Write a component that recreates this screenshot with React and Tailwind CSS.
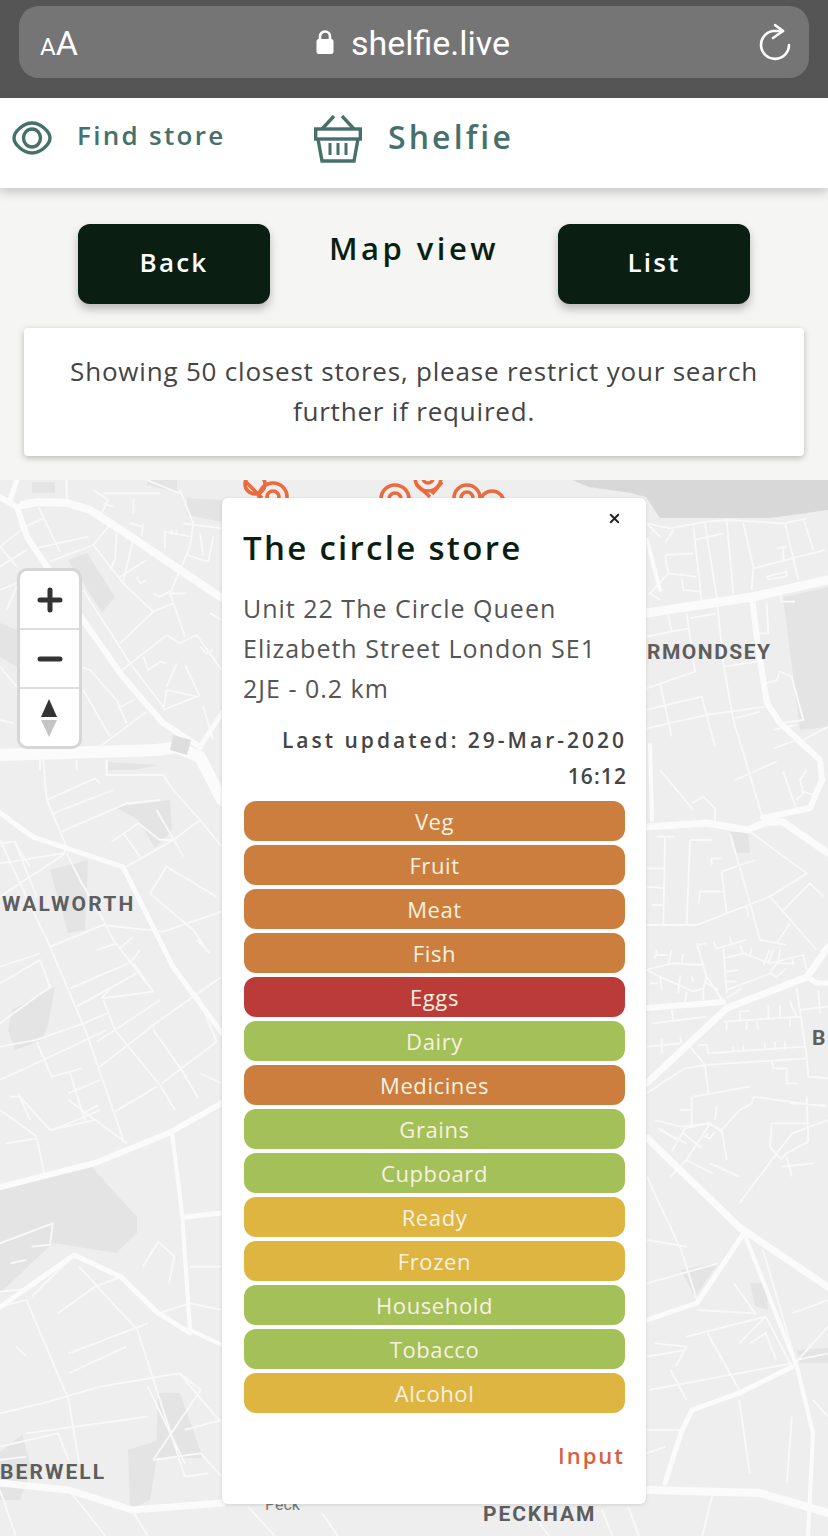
import React from 'react';
import { X } from 'lucide-react';

const pills = [
  ['Veg', 'bg-[#cb7e3e]'],
  ['Fruit', 'bg-[#cb7e3e]'],
  ['Meat', 'bg-[#cb7e3e]'],
  ['Fish', 'bg-[#cb7e3e]'],
  ['Eggs', 'bg-[#bb3b38]'],
  ['Dairy', 'bg-[#a3c059]'],
  ['Medicines', 'bg-[#cb7e3e]'],
  ['Grains', 'bg-[#a3c059]'],
  ['Cupboard', 'bg-[#a3c059]'],
  ['Ready', 'bg-[#deb540]'],
  ['Frozen', 'bg-[#deb540]'],
  ['Household', 'bg-[#a3c059]'],
  ['Tobacco', 'bg-[#a3c059]'],
  ['Alcohol', 'bg-[#deb540]'],
];

// thin streets, traced per area of the map
const streetsLeftTop = 'M115,80 L180,215 M280,195 L370,310 L460,395 L360,490 M280,195 L150,245 M105,205 L265,170 M130,115 L75,140 L0,200 M105,205 L150,260 M0,200 L50,260 M0,260 L80,210 M250,330 L390,550 L490,680 M325,140 L280,195 M350,160 L345,240 L330,270 M400,175 L370,305 M430,130 L425,170 M440,240 L360,290 M510,340 L555,470 M460,395 L520,370 M510,340 L570,200 L580,130 L540,30 M490,155 L575,170 M495,155 L495,205 M515,150 L515,165 M530,150 L530,165 M550,130 L665,145 M600,160 L610,225 M640,170 L625,245 M560,225 L625,245 M280,30 L325,60 L300,110 M310,70 L340,80 M400,55 L400,100 M310,40 L480,40 M440,0 L540,40 M390,130 L430,140 M200,0 L200,60 M360,575 L500,465 L540,490 L590,465 L665,570 M430,530 L445,570 L480,545 L500,550 M555,555 L600,650 M600,500 L620,520 L640,510 M510,340 L560,340 M500,630 L590,650 L490,690 M500,630 L490,690 M530,550 L500,620 M240,560 L270,570 L350,660 L380,730 M355,685 L400,660 M300,800 L440,695 M250,630 L330,770 M0,330 L50,310 M20,390 L50,320 M0,560 L50,620 M0,720 L40,730 M630,400 L665,420 M610,680 L640,780 M120,840 L120,870 M320,840 L320,870 M230,840 L230,870 M460,340 L480,350 L510,335 M410,290 L420,310 L440,300';
const streetsLeftMid = 'M130,60 L140,180 L200,320 L190,345 L60,430 M0,310 L45,305 L110,470 M160,220 L340,150 M185,275 L380,190 L480,180 M140,180 L285,115 L300,130 M320,60 L320,105 L490,105 L520,150 M335,305 L415,250 L480,300 L520,300 M370,280 L420,350 M380,380 L520,300 L600,240 L665,320 M470,210 L550,350 M600,240 L520,150 M0,370 L190,340 M45,310 L90,380 M60,430 L0,470 M200,340 L240,420 L310,540 L340,600 L460,755 M0,300 L60,430 L150,620 L260,880 L370,1200 M290,630 L350,610 M360,625 L400,590 M390,670 L420,630 M150,620 L310,555 L490,575 L665,515 M210,745 L385,670 M230,800 L410,700 M305,775 L330,745 L410,700 M305,775 L460,755 L400,670 M250,850 L320,820 M130,960 L320,870 M0,1020 L130,960 M300,980 L480,840 L665,710 M110,905 L155,1010 L245,985 M210,1000 L255,1140 M205,1060 L300,1020 M250,1120 L295,1095 M345,870 L385,920 L480,1035 L525,1110 M345,1115 L470,1040 M310,780 L345,870 L480,780 M345,870 L290,905 M460,870 L545,990 L595,1075 M485,1030 L650,905 L595,770 M450,460 L500,380 L650,470 M450,460 L580,570 L620,630 M0,680 L120,640 M0,730 L120,660 L150,740 L0,850 M0,920 L110,900 L250,850 M30,1070 L60,1070 L150,1170 L285,1140 M55,1060 L90,1140 M600,1000 L665,1030 M590,600 L630,640';
const streetsLeftLow = 'M0,30 L70,110 M130,0 L240,130 M70,115 L10,130 M70,115 L85,230 M100,90 L190,30 M0,430 L100,370 L95,435 L60,440 M20,490 L50,480 M0,575 L60,565 M140,465 L60,590 M0,620 L50,600 L90,750 L130,900 L150,1090 M150,500 L260,690 L350,1130 M230,530 L180,560 L110,640 M270,500 L300,425 L330,470 L320,550 M300,640 L360,610 L420,630 M360,500 L420,500 M30,740 L50,770 M130,760 L280,670 M130,820 L240,740 M80,910 L190,860 L340,820 L420,970 M280,860 L350,1090 M340,820 L380,870 L290,1080 M350,990 L420,960 M290,1080 L380,1060 L420,1130 M350,1130 L395,1120 M50,1000 L280,950 M0,940 L80,910 M0,1040 L110,1000 L130,1080 M0,1080 L50,1070 M0,1170 L30,1308 M130,1170 L200,1308 M250,1230 L280,1308 M470,1220 L520,1308 M610,1240 L640,1308 M1140,1230 L1160,1308';
const streetsRightTop = 'M20,130 L90,145 L200,125 L260,120 L430,130 L500,115 M260,120 L280,340 M195,130 L230,350 L250,550 L280,720 L370,1020 M160,140 L185,360 M165,180 L250,160 M75,225 L160,220 M75,225 L85,280 L170,290 M85,280 L30,340 L60,360 M125,295 L130,330 L180,335 M310,130 L340,260 L335,330 M340,265 L555,210 M435,130 L475,300 M410,205 L440,200 M430,205 L430,240 M380,290 L440,275 L440,290 L385,298 Z M490,115 L520,210 M85,405 L95,455 M140,400 L165,575 L20,625 M20,470 L145,445 M150,415 L230,400 M60,610 L95,770 M20,690 L185,650 L225,800 M20,745 L200,705 L375,680 M285,715 L360,695 M250,560 L350,545 M355,460 L385,460 L380,370 M380,610 L410,600 L420,575 L455,590 L490,720 L420,730 M420,340 L425,365 L465,365 M400,750 L470,735 M400,805 L470,780 M285,900 L410,845 M430,875 L470,990 M490,780 L564,740 M500,870 L480,900 L490,940 L470,960 M490,935 L520,945 M60,870 L160,990 M155,970 L190,950 L225,985 L225,1020 M20,130 L60,170 M100,150 L75,190';
const streetsRightMid = 'M20,145 L75,145 M50,50 L105,50 M75,50 L70,315 M150,60 L215,60 M150,60 L140,315 M20,200 L75,205 M35,255 L70,255 M20,315 L170,315 L390,230 L500,160 L330,35 M270,40 L330,250 L360,360 L440,375 M245,155 L345,120 M245,155 L260,280 M175,250 L180,215 L250,215 M390,230 L530,390 M450,310 L410,370 M215,135 L215,115 L245,115 M430,270 L510,190 L550,230 M320,260 L325,290 M170,370 L200,470 L250,545 M170,375 L200,370 M220,365 L230,385 L320,360 M250,385 L260,520 M250,415 L310,400 L390,430 L490,405 L500,450 M270,350 L275,375 M300,375 L310,400 M335,385 L330,405 M390,390 L370,435 M400,390 L385,430 M420,390 L415,420 M390,460 L410,430 L460,430 L455,410 M390,460 L410,470 L440,445 M260,510 L380,465 L390,460 M20,450 L95,430 L190,435 M50,390 L45,415 M50,405 L85,405 M95,390 L85,430 M130,400 L125,430 M20,450 L60,470 L160,515 L190,505 L200,470 M60,470 L65,510 M120,465 L115,520 M155,470 L160,485 M140,515 L135,545 M190,505 L190,540 M200,490 L235,510 M260,485 L290,485 M260,455 L295,450 M30,490 L55,490 M260,535 L305,505 M95,570 L100,600 M35,610 L200,590 M250,605 L480,590 M300,600 L300,575 L330,572 M260,605 L260,630 M320,605 L320,630 M350,605 L355,630 M385,600 L385,555 M420,590 L420,555 M450,595 L450,620 M450,545 L470,590 M470,505 L500,710 L505,770 L564,775 M480,570 L564,560 M20,680 L120,670 M65,655 L65,700 M120,650 L125,670 M150,680 L195,735 L205,820 M175,675 L200,675 L205,700 L495,680 M280,680 L280,695 M310,675 L310,690 M375,670 L375,685 M405,665 L405,685 M435,665 L435,690 M20,820 L135,745 L200,735 L500,715 M395,725 L400,745 L440,745 L440,790 L475,790 M535,510 L540,580 M160,830 L330,800 M155,830 L155,915 M120,870 L155,870 M135,925 L205,910 L245,930 L300,870 L335,850 L340,830 L560,860 M500,830 L505,965 L440,1000 L420,1020 M395,910 L500,910 M395,910 L390,980 L420,1015 M135,925 L95,995 M245,930 L260,1020 M55,925 L110,960 M130,940 L185,985 M205,940 L195,950 L210,955 L225,935 M230,860 L225,900 M450,850 L555,855';
const streetsRightLow = 'M1225,230 L1290,450 L1320,600 M1225,550 L1360,490 M1225,420 L1300,440 M1240,60 L1290,80 L1345,70 L1370,100 M1345,70 L1300,180 L1270,230 M1300,180 L1350,220 M1345,190 L1400,230 M1400,310 L1500,100 L1568,60 M1445,450 L1510,800 M1300,710 L1450,650 L1500,800 M1230,870 L1500,790 M1340,700 L1400,870 M1270,810 L1300,900 M1320,630 L1430,640 L1390,550 M1450,650 L1400,730 M1420,730 L1450,700 L1470,780 M1510,780 L1568,760 M1500,640 L1568,600 M1568,680 L1500,800 M1240,730 L1300,740 L1280,800 M1225,990 L1290,990 M1400,900 L1420,1120 M1500,950 L1490,1150 M1350,1180 L1330,1308 M1225,1060 L1260,1040 M1568,950 L1540,900 M1225,770 L1300,750 M1250,90 L1300,130 M1480,200 L1540,190 M1490,170 L1500,230 M1000,1220 L1040,1308 M1190,1220 L1210,1308';

const majorRoads = [
  ['M647,613 L752,597 L828,580', 9],
  ['M752,597 L758,647 L767,703 L780,723 L820,760 L822,780 L810,808 L763,818', 6],
  ['M647,827 L707,823 L747,830 L767,822 L783,822 L828,853', 7],
  ['M647,1083 L727,1008 L807,977 L828,947', 7],
  ['M647,1008 L723,1002', 6],
  ['M807,977 L817,983 L828,983', 5],
  ['M647,1138 L739,1227 L828,1287', 7],
  ['M647,1320 L697,1303 L744,1233', 5],
  ['M647,1490 L760,1493 L828,1513', 8],
  ['M792,1367 L739,1393 L692,1410 L681,1433 L665,1483', 5],
  ['M744,1233 L797,1367 L813,1433 L808,1536', 4],
  ['M0,1187 L95,1163 L169,1133 L222,1103', 6],
  ['M172,1133 L182,1213 L190,1330 L222,1345', 4],
  ['M185,1217 L222,1213', 5],
  ['M0,1307 L74,1255 L121,1277 L158,1313 L190,1333', 5],
  ['M0,1483 L69,1490 L132,1510 L222,1503', 7],
  ['M0,755 L157,750 L177,747 L200,757 L222,800', 12],
  ['M0,813 L33,837 L123,867 L173,967 L222,1033', 5],
  // top left, the arc and the diagonal
  ['M23,505 L37,502 L67,503 L90,510 L133,538 L180,570 L222,598', 8],
  ['M0,497 L17,507 L27,537 L47,567 L83,620 L123,677 L163,723 L200,747', 6],
  ['M17,480 L10,500', 5],
  ['M200,747 L222,713', 5],
  ['M647,540 L660,590', 4],
  ['M650,745 L652,820', 4],
];

const patches = [
  '0,1190 90,1165 137,1217 137,1233 116,1253 53,1243 0,1293',
  '158,1393 180,1393 203,1458 156,1458',
  '0,1452 22,1435 32,1470 20,1500 0,1500',
  '115,807 170,800 172,830 155,848 138,820',
  '12,1010 55,987 48,1025 42,1040 15,1050 8,1030',
  '50,870 88,860 85,930 68,933 60,905',
  '68,560 87,553 115,597 102,612',
  '32,482 55,482 55,493 32,493',
  '187,498 222,500 222,522 187,515',
  '147,480 177,480 177,492 147,485',
  '0,623 17,630 17,667 0,657',
  '108,762 160,765 133,770 108,770',
  '681,1270 718,1263 695,1297',
  '750,1283 766,1283 768,1310 755,1306',
  '797,1350 828,1348 828,1363 800,1363',
  '783,597 828,587 828,727 800,730',
  '730,832 748,832 750,853 736,853',
  '128,1450 160,1440 150,1500 130,1510',
];

function MapDrawing() {
  const street = { fill: 'none', stroke: '#f9f9f9', strokeWidth: 1.8, vectorEffect: 'non-scaling-stroke' };
  return (
    <svg className="absolute inset-0" width="828" height="1056" viewBox="0 480 828 1056">
      <rect x="0" y="480" width="828" height="1056" fill="#eeeeee" />
      {patches.map(p => <polygon key={p} points={p} fill="#e4e4e4" />)}
      <polygon points="572,480 828,480 828,510 770,518 720,518 660,518 646,497 631,493 589,487" fill="#d8d8d8" />
      <g transform="translate(0,480) scale(0.3333)"><path d={streetsLeftTop} {...street} /></g>
      <g transform="translate(0,740) scale(0.3333)"><path d={streetsLeftMid} {...street} /></g>
      <g transform="translate(0,1100) scale(0.528,0.3333)"><path d={streetsLeftLow} {...street} /></g>
      <g transform="translate(640,480) scale(0.3333)"><path d={streetsRightTop} {...street} /></g>
      <g transform="translate(640,820) scale(0.3333)"><path d={streetsRightMid} {...street} /></g>
      <g transform="translate(0,1100) scale(0.528,0.3333)"><path d={streetsRightLow} {...street} /></g>
      {majorRoads.map(([d, w]) => (
        <path key={d} d={d} fill="none" stroke="#fbfbfb" strokeWidth={w} strokeLinejoin="round" strokeLinecap="round" />
      ))}
      <polygon points="173,735 191,740 187,755 170,750" fill="#dedede" />
      <g fill="none" stroke="#ea6b3d" strokeWidth="3.6">
        <circle cx="255" cy="484" r="10" />
        <circle cx="273" cy="497" r="14" />
        <circle cx="273" cy="497" r="6" />
        <path d="M246,482 L262,498" />
        <circle cx="395" cy="499" r="14" />
        <circle cx="395" cy="499" r="6" />
        <circle cx="428" cy="478" r="13" />
        <circle cx="428" cy="478" r="5" />
        <path d="M416,484 L430,497 M442,482 L432,494" />
        <circle cx="467" cy="498" r="13" />
        <circle cx="467" cy="498" r="6" />
        <circle cx="492" cy="503" r="12" />
      </g>
    </svg>
  );
}

function ReloadIcon() {
  return (
    <svg width="34" height="40" viewBox="0 0 34 40" fill="none" stroke="#fff" strokeWidth="2.6" strokeLinecap="round" strokeLinejoin="round">
      <path d="M31,24 A14,14 0 1 1 15,10 H25" />
      <path d="M17,4 L25,10 L15,17" />
    </svg>
  );
}

function LockIcon() {
  return (
    <svg width="18" height="26" viewBox="0 0 18 26">
      <path d="M4,11 V7.5 A5,5 0 0 1 14,7.5 V11" fill="none" stroke="#fff" strokeWidth="2.6" />
      <rect x="0.5" y="10" width="17" height="15" rx="2.5" fill="#fff" />
    </svg>
  );
}

function EyeIcon() {
  return (
    <svg className="mb-[10px]" width="40" height="34" viewBox="0 0 40 34" fill="none" stroke="#46706a" strokeWidth="3.4">
      <path d="M2,17 C2,11 11,2 20,2 C29,2 38,11 38,17 C38,23 29,32 20,32 C11,32 2,23 2,17 Z" />
      <ellipse cx="20" cy="17" rx="8.5" ry="9" />
    </svg>
  );
}

function BasketIcon() {
  return (
    <svg className="mb-2" width="48" height="48" viewBox="0 0 48 48" fill="none" stroke="#46706a" strokeWidth="3.4">
      <path d="M8,14 L20,1 M40,14 L28,1" />
      <rect x="1.7" y="14" width="44.6" height="10" />
      <path d="M4,24 L8,46 H40 L44,24" />
      <path d="M16,28 V40 M24,28 V40 M32,28 V40" strokeWidth="3" />
    </svg>
  );
}

function ZoomControl() {
  return (
    <div className="absolute left-[17px] top-[88px] w-[65px] h-[181px] border-[3.5px] border-[#d6d6d6] rounded-[10px] bg-white flex flex-col">
      <div className="h-[59px] flex items-center justify-center border-b-2 border-[#dddddd]">
        <svg width="26" height="26" viewBox="0 0 26 26" fill="none" stroke="#333" strokeWidth="5" strokeLinecap="round"><path d="M13,3 V23 M3,13 H23" /></svg>
      </div>
      <div className="h-[59px] flex items-center justify-center border-b-2 border-[#dddddd]">
        <svg width="26" height="10" viewBox="0 0 26 10" fill="none" stroke="#333" strokeWidth="5" strokeLinecap="round"><path d="M3,5 H23" /></svg>
      </div>
      <div className="flex-1 flex items-center justify-center pr-px">
        <svg width="18" height="38" viewBox="0 0 18 38"><path d="M9,0 L17,18 H1 Z" fill="#333" /><path d="M9,38 L17,21 H1 Z" fill="#c4c4c4" /></svg>
      </div>
    </div>
  );
}

function StorePopup() {
  return (
    <div className="absolute left-[222px] top-[18px] w-[424px] h-[1006px] bg-white rounded-md shadow-[0_1px_4px_rgba(0,0,0,0.12)] pt-[30px] pl-[22px] pr-[21px]">
      <X size={15} strokeWidth={3} className="absolute right-[24px] top-[13px] text-[#222]" />
      <h2 className="text-[33px] leading-[40px] font-semibold tracking-[2.3px] text-[#0a1f12] -ml-px whitespace-nowrap">The circle store</h2>
      <p className="mt-5 text-[25px] leading-[40px] tracking-[1px] text-[#555] -ml-px whitespace-nowrap">
        Unit 22 The Circle Queen<br />Elizabeth Street London SE1<br />2JE - 0.2 km
      </p>
      <p className="mt-[14px] text-[21px] leading-[36px] font-semibold tracking-[3px] text-[#444] text-right whitespace-nowrap -mr-[2px]">
        Last updated: 29-Mar-2020<br /><span className="tracking-[1.1px]">16:12</span>
      </p>
      <div className="mt-[7px] flex flex-col gap-1">
        {pills.map(([label, color]) => (
          <div key={label} className={`h-10 rounded-xl flex items-center justify-center text-[22px] tracking-[0.6px] text-[#f9f1e0] ${color}`}>{label}</div>
        ))}
      </div>
      <div className="mt-[27px] text-right text-[22px] leading-[30px] font-semibold tracking-[2px] text-[#d9603f]">Input</div>
    </div>
  );
}

export default function App() {
  return (
    <div className="w-[828px] h-[1536px] overflow-hidden bg-[#f5f5f3] font-['Open_Sans',sans-serif]">
      <div className="h-[98px] bg-[#555555] px-[19px] pt-[6px]">
        <div className="relative h-[72px] rounded-[20px] bg-[#757575] flex items-center justify-center text-white">
          <span className="absolute left-[21px] top-[20px] font-['Roboto',sans-serif] leading-none"><span className="text-[24px]">A</span><span className="text-[34px]">A</span></span>
          <span className="ml-[-2px]"><LockIcon /></span>
          <span className="ml-[17px] font-['Roboto',sans-serif] text-[34px] leading-none mt-px">shelfie.live</span>
          <span className="absolute right-[17px] top-[15px]"><ReloadIcon /></span>
        </div>
      </div>

      <header className="relative h-[90px] bg-white shadow-[0_4px_10px_rgba(0,0,0,0.2)] flex items-center pl-3 text-[#46706a]">
        <EyeIcon />
        <span className="ml-[25px] text-[26px] leading-[30px] font-semibold tracking-[2.3px] w-[237px] -mt-4 whitespace-nowrap">Find store</span>
        <BasketIcon />
        <span className="ml-[26px] text-[32px] leading-[40px] font-semibold tracking-[3.1px] -mt-[13px]">Shelfie</span>
      </header>

      <div className="flex justify-between px-[78px] pt-9">
        <button className="w-[192px] h-20 rounded-xl bg-[#0a1f12] text-white text-[26px] font-semibold tracking-[2.2px] pb-1 shadow-[0_5px_10px_rgba(0,0,0,0.25)]">Back</button>
        <h1 className="text-[31px] leading-[48px] font-semibold tracking-[3.5px] text-[#0a1f12] whitespace-nowrap">Map view</h1>
        <button className="w-[192px] h-20 rounded-xl bg-[#0a1f12] text-white text-[26px] font-semibold tracking-[2.2px] pb-1 shadow-[0_5px_10px_rgba(0,0,0,0.25)]">List</button>
      </div>

      <div className="mx-6 mt-6 h-32 bg-white rounded shadow-[0_2px_6px_rgba(0,0,0,0.25)] pt-[23px] px-8 text-center text-[26px] leading-10 tracking-[0.8px] text-[#444]">
        Showing 50 closest stores, please restrict your search further if required.
      </div>

      <div className="relative h-[1056px] mt-6 overflow-hidden">
        <MapDrawing />
        <ZoomControl />
        <span className="absolute left-[647px] top-[157px] whitespace-nowrap font-['Roboto',sans-serif] text-[21px] font-bold tracking-[1.5px] text-[#5e5e5e]">RMONDSEY</span>
        <span className="absolute left-[2px] top-[409px] font-['Roboto',sans-serif] text-[21px] font-bold tracking-[2.2px] text-[#5e5e5e]">WALWORTH</span>
        <span className="absolute left-[812px] top-[543px] font-['Roboto',sans-serif] text-[21px] font-bold text-[#5e5e5e]">B</span>
        <span className="absolute left-0 top-[977px] font-['Roboto',sans-serif] text-[21px] font-bold tracking-[2.1px] text-[#5e5e5e]">BERWELL</span>
        <span className="absolute left-[483px] top-[1019px] font-['Roboto',sans-serif] text-[21px] font-bold tracking-[1.9px] text-[#5e5e5e]">PECKHAM</span>
        <span className="absolute left-[265px] top-[1013px] font-['Roboto',sans-serif] text-[16px] text-[#777]">Peck</span>
        <StorePopup />
      </div>
    </div>
  );
}
